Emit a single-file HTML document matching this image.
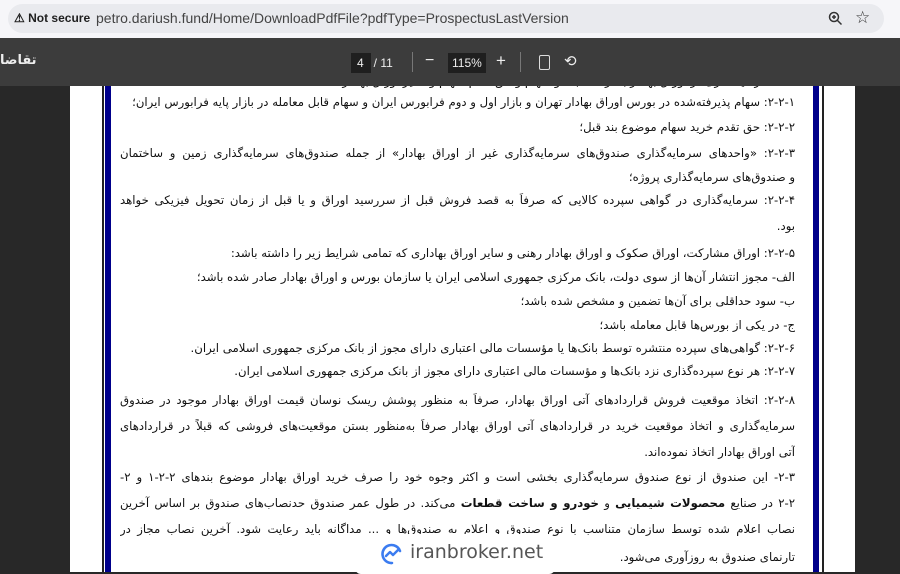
<!DOCTYPE html>
<html><head><meta charset="utf-8"><style>
body{margin:0;width:900px;height:572px;overflow:hidden;background:#282828;font-family:"Liberation Sans",sans-serif;position:relative}
.top{position:absolute;left:0;top:0;width:900px;height:38px;background:#f6f6f9;z-index:3}
.omni{position:absolute;left:8px;top:4px;width:876px;height:29px;border-radius:15px;background:#e9eaee}
.ns{position:absolute;left:14px;top:11px;font-size:12px;color:#1f1f1f;font-weight:bold}
.url{position:absolute;left:96px;top:10px;font-size:14px;color:#444}
.tb{position:absolute;left:0;top:38px;width:900px;height:48px;background:#3c3c3c;color:#eee;z-index:3}
.page{position:absolute;left:70px;top:60px;width:785px;height:512px;background:#fff}
.l{position:absolute;left:120px;width:675px;direction:rtl;text-align:justify;text-align-last:justify;font-family:"DejaVu Sans","Noto Sans CJK SC",sans-serif;font-size:11.7px;color:#111;white-space:nowrap;overflow:hidden}
.r{text-align-last:right}
</style></head><body>
<div class="top"><div class="omni"></div>
<div class="ns">⚠ Not secure</div>
<div class="url">petro.dariush.fund/Home/DownloadPdfFile?pdfType=ProspectusLastVersion</div>
<svg style="position:absolute;left:828px;top:11px" width="15" height="15" viewBox="0 0 15 15"><circle cx="6" cy="6" r="4.5" fill="none" stroke="#333" stroke-width="1.5"/><path d="M9.5 9.5L13.5 13.5M4 6h4M6 4v4" stroke="#333" stroke-width="1.5"/></svg>
<div style="position:absolute;left:855px;top:8px;font-size:17px;color:#333">☆</div>
</div>
<div class="tb">
<div style="position:absolute;left:0;top:15px;font-size:13px;font-weight:bold;font-family:'DejaVu Sans',sans-serif">تقاضا</div>
<div style="position:absolute;left:351px;top:15px;width:20px;height:20px;background:#1f1f1f"></div>
<div style="position:absolute;left:357px;top:18px;font-size:12px">4 &nbsp; / 11</div>
<div style="position:absolute;left:412px;top:14px;width:1px;height:20px;background:#777"></div>
<div style="position:absolute;left:425px;top:14px;font-size:16px">−</div>
<div style="position:absolute;left:448px;top:15px;width:38px;height:20px;background:#1f1f1f"></div>
<div style="position:absolute;left:452px;top:18px;font-size:12px">115%</div>
<div style="position:absolute;left:496px;top:13px;font-size:17px">+</div>
<div style="position:absolute;left:520px;top:14px;width:1px;height:20px;background:#777"></div>
<div style="position:absolute;left:539px;top:17px;width:9px;height:13px;border:1.5px solid #ddd;border-radius:2px"></div>
<div style="position:absolute;left:564px;top:14px;font-size:15px">⟲</div>
</div>
<div class="page">
<div style="position:absolute;left:32px;top:0;width:1.5px;height:512px;background:#222"></div>
<div style="position:absolute;left:35px;top:0;width:6px;height:512px;background:#00008b"></div>
<div style="position:absolute;left:743px;top:0;width:6px;height:512px;background:#00008b"></div>
<div style="position:absolute;left:752px;top:0;width:1.5px;height:512px;background:#222"></div>
</div>
<div class="l r" style="top:74px">۲-۱: سرمایه‌گذاری در اوراق بهادار با درآمد ثابت و سهام و حق تقدم سهام و سایر اوراق بهادار</div>
<div class="l r" style="top:95px">۲-۲-۱: سهام پذیرفته‌شده در بورس اوراق بهادار تهران و بازار اول و دوم فرابورس ایران و سهام قابل معامله در بازار پایه فرابورس ایران؛</div>
<div class="l r" style="top:120px">۲-۲-۲: حق تقدم خرید سهام موضوع بند قبل؛</div>
<div class="l" style="top:146px">۲-۲-۳: «واحدهای سرمایه‌گذاری صندوق‌های سرمایه‌گذاری غیر از اوراق بهادار» از جمله صندوق‌های سرمایه‌گذاری زمین و ساختمان</div>
<div class="l r" style="top:170px">و صندوق‌های سرمایه‌گذاری پروژه؛</div>
<div class="l" style="top:193px">۲-۲-۴: سرمایه‌گذاری در گواهی سپرده کالایی که صرفاً به قصد فروش قبل از سررسید اوراق و یا قبل از زمان تحویل فیزیکی خواهد</div>
<div class="l r" style="top:219px">بود.</div>
<div class="l r" style="top:246px">۲-۲-۵: اوراق مشارکت، اوراق صکوک و اوراق بهادار رهنی و سایر اوراق بهاداری که تمامی شرایط زیر را داشته باشد:</div>
<div class="l r" style="top:270px">الف- مجوز انتشار آن‌ها از سوی دولت، بانک مرکزی جمهوری اسلامی ایران یا سازمان بورس و اوراق بهادار صادر شده باشد؛</div>
<div class="l r" style="top:294px">ب- سود حداقلی برای آن‌ها تضمین و مشخص شده باشد؛</div>
<div class="l r" style="top:318px">ج- در یکی از بورس‌ها قابل معامله باشد؛</div>
<div class="l r" style="top:341px">۲-۲-۶: گواهی‌های سپرده منتشره توسط بانک‌ها یا مؤسسات مالی اعتباری دارای مجوز از بانک مرکزی جمهوری اسلامی ایران.</div>
<div class="l r" style="top:364px">۲-۲-۷: هر نوع سپرده‌گذاری نزد بانک‌ها و مؤسسات مالی اعتباری دارای مجوز از بانک مرکزی جمهوری اسلامی ایران.</div>
<div class="l" style="top:393px">۲-۲-۸: اتخاذ موقعیت فروش قراردادهای آتی اوراق بهادار، صرفاً به منظور پوشش ریسک نوسان قیمت اوراق بهادار موجود در صندوق</div>
<div class="l" style="top:419px">سرمایه‌گذاری و اتخاذ موقعیت خرید در قراردادهای آتی اوراق بهادار صرفاً به‌منظور بستن موقعیت‌های فروشی که قبلاً در قراردادهای</div>
<div class="l r" style="top:445px">آتی اوراق بهادار اتخاذ نموده‌اند.</div>
<div class="l" style="top:470px">۲-۳- این صندوق از نوع صندوق سرمایه‌گذاری بخشی است و اکثر وجوه خود را صرف خرید اوراق بهادار موضوع بندهای ۲-۲-۱ و ۲-</div>
<div class="l" style="top:496px">۲-۲ در صنایع <b>محصولات شیمیایی</b> و <b>خودرو و ساخت قطعات</b> می‌کند. در طول عمر صندوق حدنصاب‌های صندوق بر اساس آخرین</div>
<div class="l" style="top:522px">نصاب اعلام شده توسط سازمان متناسب با نوع صندوق و اعلام به صندوق‌ها و ... مداگانه باید رعایت شود. آخرین نصاب مجاز در</div>
<div class="l r" style="top:550px">تارنمای صندوق به روزآوری می‌شود.</div>
<div style="position:absolute;left:355px;top:534px;width:200px;height:40px;background:#fff;border-radius:6px"></div>
<svg style="position:absolute;left:380px;top:542px" width="24" height="24" viewBox="0 0 24 24"><path d="M20 9A9 9 0 1 0 12 21" fill="none" stroke="#3b7cf0" stroke-width="2.6" stroke-linecap="round"/><path d="M6 14l4-4 3 3 6-6" fill="none" stroke="#3b7cf0" stroke-width="2.4" stroke-linecap="round" stroke-linejoin="round"/></svg>
<div style="position:absolute;left:410px;top:541px;font-size:19px;color:#555;font-family:'DejaVu Sans',sans-serif">iranbroker.net</div>
</body></html>
